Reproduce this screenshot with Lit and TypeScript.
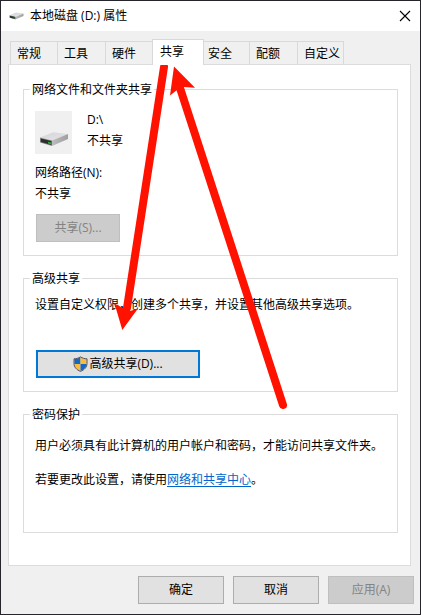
import { LitElement, html, css } from "lit";
import { customElement, property, state } from "lit/decorators.js";
import { classMap } from "lit/directives/class-map.js";

@customElement("drive-icon")
class DriveIcon extends LitElement {
  static styles = css`
    :host { display: inline-flex; }
    svg { display: block; width: 100%; }
  `;
  render() {
    return html`<svg viewBox="0 0 30 16" aria-hidden="true">
      <defs>
        <linearGradient id="top" x1="0" y1="0" x2="1" y2="1">
          <stop offset="0" stop-color="#d6d6d9" /><stop offset="1" stop-color="#e4e4e8" />
        </linearGradient>
        <linearGradient id="side" x1="0" y1="0" x2="1" y2="0">
          <stop offset="0" stop-color="#bcbcbe" /><stop offset="1" stop-color="#a0a0a2" />
        </linearGradient>
      </defs>
      <path d="M1 6.5 14 1.2 29 3 13 9.5Z" fill="url(#top)" />
      <path d="M13 9.500 29 3V8L13 15Z" fill="url(#side)" />
      <path d="M1 6.500 13 9.500V15L1 11.500Z" fill="#8b8c8e" />
      <path d="M1.800 7.400 12.400 10.100V13.900L1.800 10.900Z" fill="#2c2e2e" />
      <path d="M9 10.800 12 11.600V13.200L9 12.400Z" fill="#2fae3c" />
    </svg>`;
  }
}

@customElement("shield-icon")
class ShieldIcon extends LitElement {
  static styles = css`
    :host { display: inline-flex; width: 15px; }
    svg { display: block; width: 100%; }
  `;
  render() {
    return html`<svg viewBox="0 0 15 16" aria-hidden="true">
      <defs>
        <clipPath id="shape">
          <path d="M7.5 1.2C5.6 2.4 3.6 3 1.4 3V7.5C1.4 11 3.8 13.4 7.5 15 11.2 13.4 13.6 11 13.6 7.5V3C11.4 3 9.4 2.4 7.5 1.2Z" />
        </clipPath>
      </defs>
      <g clip-path="url(#shape)">
        <path d="M0 0H7.5V8H0Z" fill="#1467c8" />
        <path d="M7.5 0H15V8H7.5Z" fill="#fdbb38" />
        <path d="M0 8H7.5V16H0Z" fill="#fdbb38" />
        <path d="M7.5 8H15V16H7.5Z" fill="#1467c8" />
      </g>
      <path d="M7.5 .9C5.6 2.1 3.4 2.8 1 2.8V7.5C1 11.2 3.6 13.8 7.5 15.4 11.4 13.8 14 11.2 14 7.5V2.8C11.6 2.8 9.4 2.1 7.5 .9Z" fill="none" stroke="#4c5460" />
    </svg>`;
  }
}

@customElement("tab-strip")
class TabStrip extends LitElement {
  @property({ type: Array }) tabs: string[] = [];
  @property({ type: Number }) selected = 0;

  static styles = css`
    :host { display: block; }
    .tabs { display: flex; align-items: flex-end; height: 25px; padding: 0 2px; }
    .tab {
      box-sizing: border-box;
      min-width: 48px;
      height: 23px;
      margin: 0;
      margin-right: -1px;
      padding: 2px 3px 0 6px;
      border: 1px solid #d9d9d9;
      border-bottom: 0;
      background: #f0f0f0;
      color: #000;
      font: inherit;
      text-align: left;
      flex: none;
    }
    .tab + .tab { min-width: 49px; }
    .tab.active {
      position: relative;
      z-index: 1;
      min-width: 52px;
      height: 26px;
      margin-bottom: -1px;
      margin-left: -1px;
      padding: 0 7px 1px;
      background: #fff;
    }
    .tab.active + .tab { min-width: 47px; padding-left: 4px; }
    .tab:last-child { min-width: 47px; }
  `;

  render() {
    return html`<div class="tabs" role="tablist">
      ${this.tabs.map(
        (label, i) => html`<button
          class=${classMap({ tab: true, active: i === this.selected })}
          role="tab"
          aria-selected=${i === this.selected ? "true" : "false"}
          @click=${() => this.dispatchEvent(new CustomEvent("pick", { detail: i }))}
        >${label}</button>`
      )}
    </div>`;
  }
}

@customElement("app-root")
class AppRoot extends LitElement {
  @state() private selected = 3;
  private tabs = ["常规", "工具", "硬件", "共享", "安全", "配额", "自定义"];

  static styles = css`
    :host {
      display: block;
      font: 12px/16px "Open Sans", "Noto Sans CJK SC", sans-serif;
      color: #000;
    }
    .window {
      position: relative;
      box-sizing: border-box;
      display: flex;
      flex-direction: column;
      min-height: 100vh;
      border: 1px solid #26252b;
      background: #f0f0f0;
    }
    .titlebar {
      display: flex;
      align-items: center;
      gap: 6px;
      height: 30px;
      padding: 0 9px 0 8px;
      background: #fff;
    }
    .title-icon { width: 15px; }
    .title { flex: 1; margin: 0; font: inherit; }
    .close { display: flex; padding: 0; border: 0; background: none; }
    .body { flex: 1; display: flex; flex-direction: column; padding: 8px 9px 10px 7px; }
    .panel {
      flex: 1;
      display: flex;
      flex-direction: column;
      gap: 13px;
      padding: 15px 12px 24px 14px;
      border: 1px solid #dcdcdc;
      background: #fff;
    }
    .group {
      min-width: 0;
      margin: 0;
      padding: 0 12px 13px 11px;
      border: 1px solid #dcdcdc;
    }
    .group legend { margin-left: -5px; padding: 2px 2px 0; }
    .text { margin: 0; }
    .share { display: flex; gap: 15px; margin: 13px 0 11px; }
    .thumb {
      display: flex;
      align-items: center;
      justify-content: center;
      width: 37px;
      height: 43px;
      padding-top: 12px;
      box-sizing: border-box;
      background: #f0f0f0;
    }
    .thumb-icon { width: 30px; }
    .rows { display: flex; flex-direction: column; gap: 5px; }
    .share .rows { padding-top: 1px; }
    .path { margin-bottom: 12px; }
    .advanced { padding-top: 10px; }
    .advanced .text { margin-bottom: 37px; }
    .password { padding-bottom: 44px; }
    .notes { display: flex; flex-direction: column; gap: 18px; padding-top: 15px; }
    a { color: #0066cc; text-decoration: underline; text-underline-offset: 2px; }
    .button {
      box-sizing: border-box;
      display: flex;
      align-items: center;
      justify-content: center;
      height: 28px;
      margin: 0;
      padding: 0;
      border: 1px solid #adadad;
      background: #e1e1e1;
      color: #000;
      font: inherit;
    }
    .button:disabled { border-color: #bfbfbf; background: #ccc; color: #838383; }
    .group .button { margin-left: 1px; }
    .small { width: 84px; }
    .wide { gap: 1px; width: 164px; border: 2px solid #0078d7; }
    .footer { display: flex; justify-content: flex-end; gap: 9px; padding: 0 6px 10px; }
    .footer .button { width: 86px; }
    .arrows {
      position: absolute;
      top: -1px;
      left: -1px;
      width: 421px;
      height: 615px;
      pointer-events: none;
    }
  `;

  render() {
    return html`<main class="window">
      <header class="titlebar">
        <drive-icon class="title-icon"></drive-icon>
        <h1 class="title">本地磁盘 (D:) 属性</h1>
        <button class="close" aria-label="关闭">
          <svg width="12" height="12" viewBox="0 0 12 12">
            <path d="M1 1 11 11M11 1 1 11" stroke="#000" stroke-width="1.1" />
          </svg>
        </button>
      </header>
      <div class="body">
        <tab-strip .tabs=${this.tabs} .selected=${this.selected}
          @pick=${(e: CustomEvent) => (this.selected = e.detail)}></tab-strip>
        <section class="panel" role="tabpanel">
          <fieldset class="group">
            <legend>网络文件和文件夹共享</legend>
            <div class="share">
              <div class="thumb"><drive-icon class="thumb-icon"></drive-icon></div>
              <div class="rows"><span>D:\\</span><span>不共享</span></div>
            </div>
            <div class="rows path"><span>网络路径(N):</span><span>不共享</span></div>
            <button class="button small" disabled>共享(S)...</button>
          </fieldset>
          <fieldset class="group">
            <legend>高级共享</legend>
            <div class="advanced">
              <p class="text">设置自定义权限，创建多个共享，并设置其他高级共享选项。</p>
              <button class="button wide"><shield-icon></shield-icon>高级共享(D)...</button>
            </div>
          </fieldset>
          <fieldset class="group password">
            <legend>密码保护</legend>
            <div class="notes">
              <p class="text">用户必须具有此计算机的用户帐户和密码，才能访问共享文件夹。</p>
              <p class="text">若要更改此设置，请使用<a href="#">网络和共享中心</a>。</p>
            </div>
          </fieldset>
        </section>
      </div>
      <footer class="footer">
        <button class="button">确定</button>
        <button class="button">取消</button>
        <button class="button" disabled>应用(A)</button>
      </footer>
      <svg class="arrows" viewBox="0 0 421 615" aria-hidden="true">
        <g stroke="#ff1200" stroke-width="8" stroke-linecap="round">
          <path d="M164 67 127 308" />
          <path d="M283 405 180 88" />
        </g>
        <g fill="#ff1200">
          <path d="M122.300 330 114.500 303.500 123 308 130 311 138 308.500Z" />
          <path d="M174 66.500 170 95.500 177 90 184 87 195 87.700Z" />
        </g>
      </svg>
    </main>`;
  }
}
